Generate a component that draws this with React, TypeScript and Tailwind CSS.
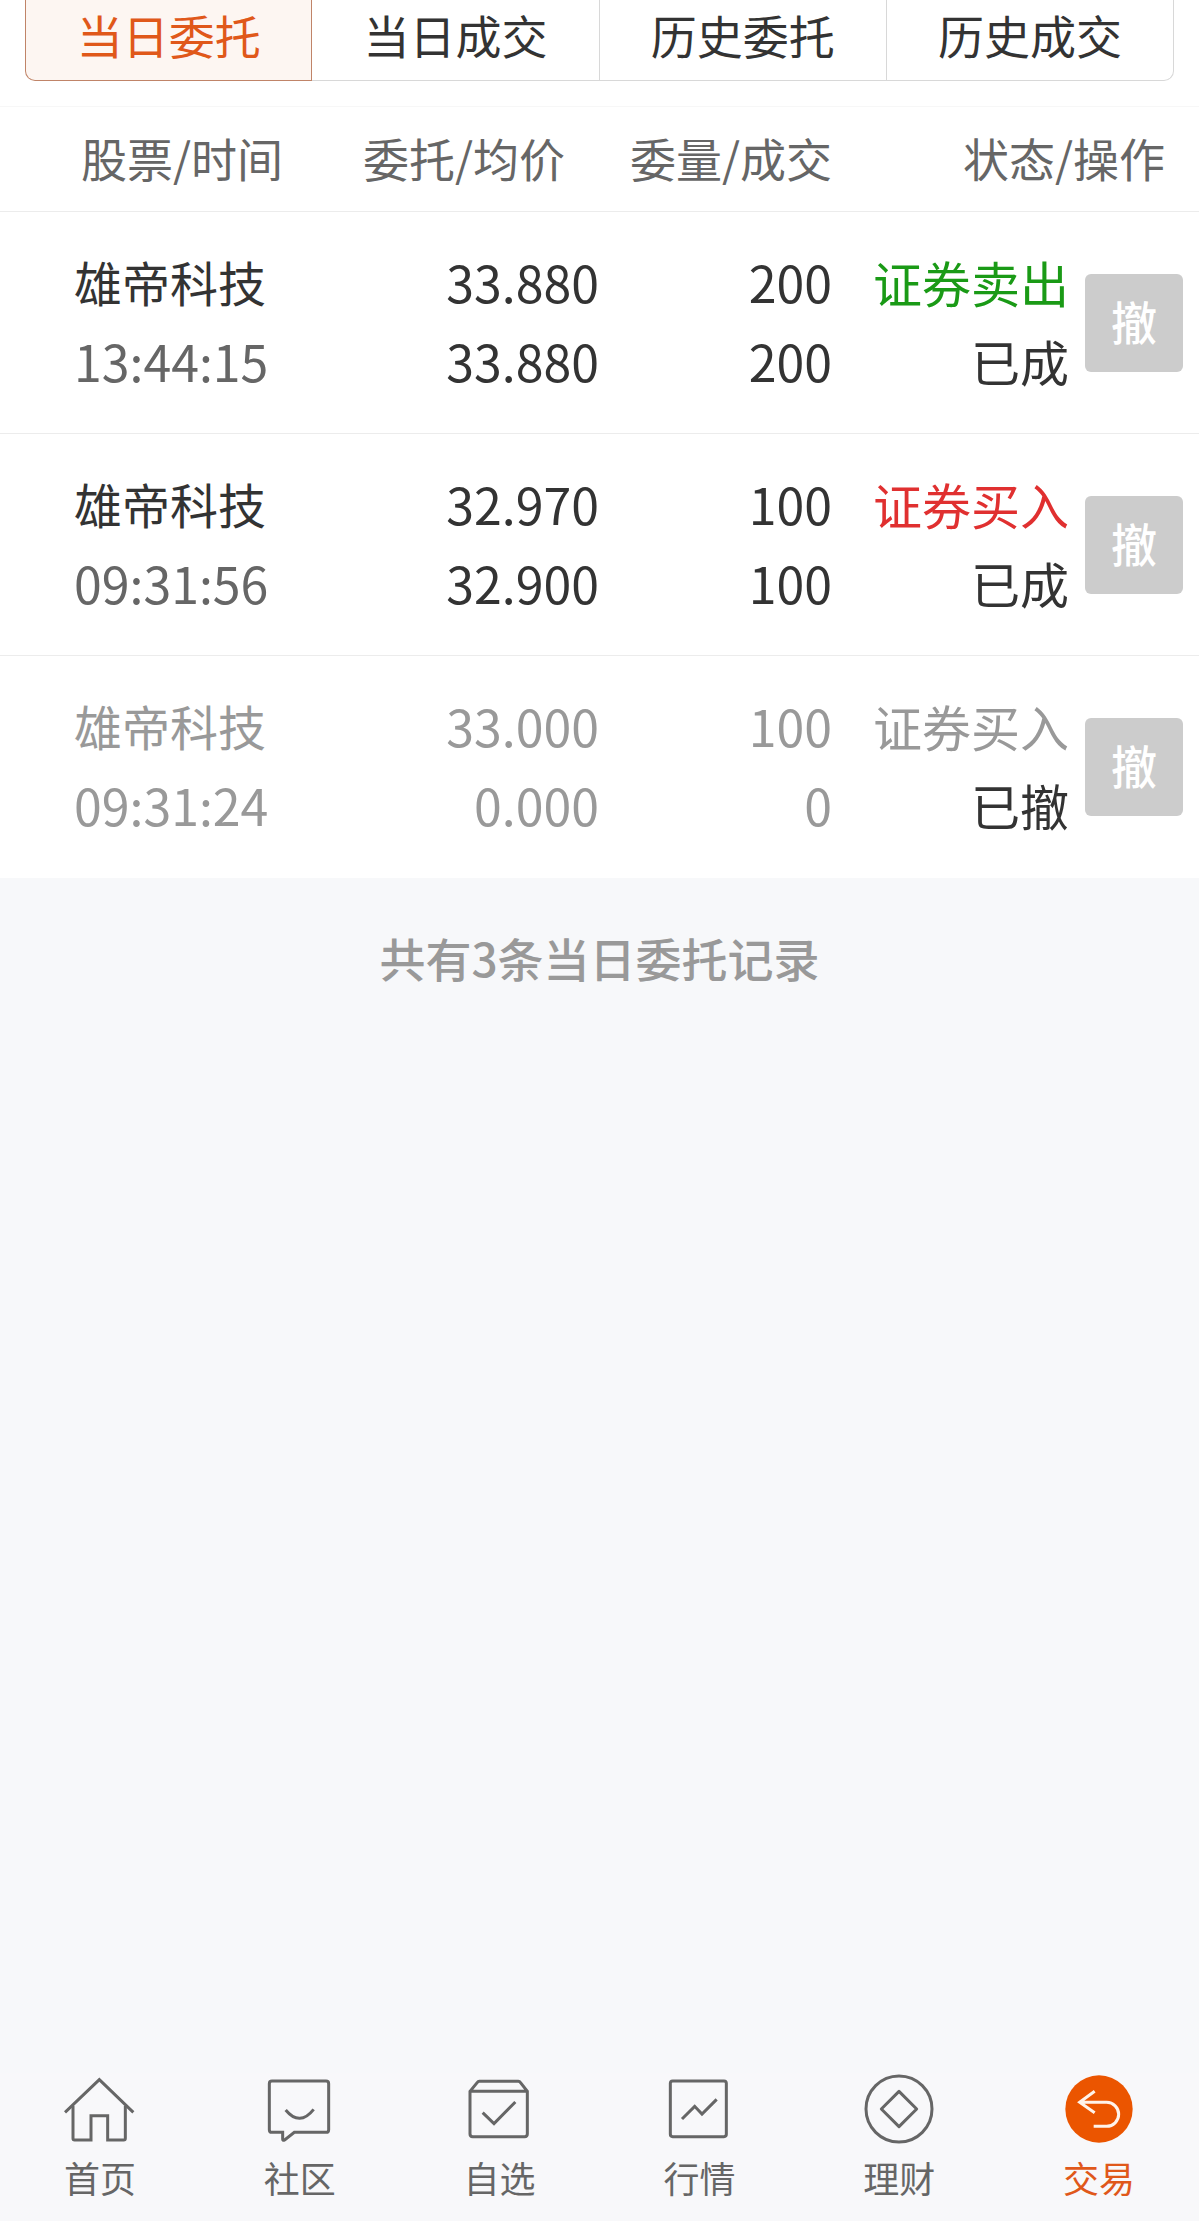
// src/pages/Trade/Orders.tsx
import React, { useState } from "react";
import clsx from "clsx";

const tabs = ["当日委托", "当日成交", "历史委托", "历史成交"];

type Order = {
  name: string;
  time: string;
  price: string;
  avgPrice: string;
  amount: string;
  filled: string;
  side: "buy" | "sell";
  status: string;
  cancelled?: boolean;
};

const orders: Order[] = [
  { name: "雄帝科技", time: "13:44:15", price: "33.880", avgPrice: "33.880", amount: "200", filled: "200", side: "sell", status: "已成" },
  { name: "雄帝科技", time: "09:31:56", price: "32.970", avgPrice: "32.900", amount: "100", filled: "100", side: "buy", status: "已成" },
  { name: "雄帝科技", time: "09:31:24", price: "33.000", avgPrice: "0.000", amount: "100", filled: "0", side: "buy", status: "已撤", cancelled: true },
];

const navItems = [
  {
    label: "首页",
    icon: (
      <>
        <path d="M3 118L106 20L208 118" />
        <path d="M27 98V196Q27 201 32 201H81V128H131V201H179Q184 201 184 196V98" />
      </>
    ),
  },
  {
    label: "社区",
    icon: (
      <>
        <path d="M24 24H186Q194 24 194 32V170Q194 178 186 178H91L62 201Q56 204 56 199V178H24Q16 178 16 170V32Q16 24 24 24Z" />
        <path d="M65 111Q107 162 149 109" />
      </>
    ),
  },
  {
    label: "自选",
    icon: (
      <>
        <path d="M18 55L40 28Q42 25 46 25H163Q167 25 169 28L190 55V183Q190 191 182 191H26Q18 191 18 183ZM18 55H190" />
        <path d="M56 119L90 152L154 87" />
      </>
    ),
  },
  {
    label: "行情",
    icon: (
      <>
        <rect x="22" y="24" width="168" height="167" rx="7" />
        <path d="M57 138L95 100L117 123L161 79" />
      </>
    ),
  },
  {
    label: "理财",
    icon: (
      <>
        <circle cx="108" cy="108" r="99" />
        <path d="M108 55L161 108L108 161L55 108Z" strokeLinejoin="round" />
      </>
    ),
  },
  {
    label: "交易",
    active: true,
    icon: (
      <>
        <circle cx="108" cy="108" r="101" fill="#eb5500" stroke="none" />
        <path d="M95 55L50 88L95 119M50 88H131A36 36 0 0 1 131 160H92" stroke="#fff3ea" />
      </>
    ),
  },
];

function OrderRow({ order }: { order: Order }) {
  const muted = order.cancelled;
  const main = muted ? "text-[#999]" : "text-[#333]";
  const side = order.side === "sell" ? "证券卖出" : "证券买入";

  return (
    <tr className="h-[222px] border-b border-[#ececec] last:border-0">
      <td className="pb-1 pl-[74px]">
        <div className={clsx("text-[48px] leading-[79px]", main)}>{order.name}</div>
        <div className={clsx("text-[50px] leading-[79px]", muted ? "text-[#999]" : "text-[#666]")}>
          {order.time}
        </div>
      </td>
      <td className={clsx("pb-1 text-right text-[50px] leading-[79px]", main)}>
        <div>{order.price}</div>
        <div>{order.avgPrice}</div>
      </td>
      <td className={clsx("pb-1 text-right text-[50px] leading-[79px]", main)}>
        <div>{order.amount}</div>
        <div>{order.filled}</div>
      </td>
      <td className="pb-1 text-right text-[49px] leading-[79px] whitespace-nowrap text-[#333]">
        <div
          className={clsx(
            muted ? "text-[#999]" : order.side === "sell" ? "text-[#1a9a16]" : "text-[#e03030]"
          )}
        >
          {side}
        </div>
        <div>{order.status}</div>
      </td>
      <td className="pl-4">
        <button
          type="button"
          disabled
          className="block size-[98px] rounded-md bg-[#ccc] pb-1 text-[46px] font-medium text-white"
        >
          撤
        </button>
      </td>
    </tr>
  );
}

export default function App() {
  const [activeTab, setActiveTab] = useState(tabs[0]);

  return (
    <div
      lang="zh-CN"
      className="flex min-h-screen flex-col bg-[#f7f8fa] font-['Noto_Sans_CJK_SC',sans-serif] text-[#333]"
    >
      {/* Tabs */}
      <div className="bg-white px-[25px] pb-[25px]">
        <div role="tablist" className="grid h-[81px] grid-cols-4">
          {tabs.map((tab) => (
            <button
              key={tab}
              type="button"
              role="tab"
              aria-selected={tab === activeTab}
              onClick={() => setActiveTab(tab)}
              className={clsx(
                "border-r border-b pb-3 text-[46px] leading-[66px] first:rounded-bl-[10px] first:border-l last:rounded-br-[10px]",
                tab === activeTab
                  ? "border-[#c08468] bg-[#fdf6f2] text-[#e0581a]"
                  : "border-[#d8d8d8] bg-white"
              )}
            >
              {tab}
            </button>
          ))}
        </div>
      </div>

      {/* Orders */}
      <table className="w-full table-fixed bg-white">
        <colgroup>
          <col />
          <col />
          <col className="w-[233px]" />
          <col className="w-[237px]" />
          <col className="w-[130px]" />
        </colgroup>
        <thead>
          <tr className="h-[105px] border-t border-b border-t-[#f7f7f7] border-b-[#ececec] text-[46px] leading-[66px] text-[#666]">
            <th className="pb-1 pl-[81px] text-left font-normal">股票/时间</th>
            <th className="pr-[34px] pb-1 text-right font-normal">委托/均价</th>
            <th className="pb-1 text-right font-normal">委量/成交</th>
            <th colSpan={2} className="pr-[34px] pb-1 text-right font-normal">
              状态/操作
            </th>
          </tr>
        </thead>
        <tbody>
          {orders.map((order) => (
            <OrderRow key={order.time} order={order} />
          ))}
        </tbody>
      </table>

      <p className="pt-11 text-center text-[46px] leading-[70px] font-medium text-[#999]">
        共有{orders.length}条当日委托记录
      </p>

      {/* Bottom nav */}
      <nav className="mt-auto grid grid-cols-6 bg-[#f8f8fa] pb-5">
        {navItems.map((item) => (
          <a
            key={item.label}
            href="#"
            className={clsx(
              "flex flex-col items-center gap-2 text-4xl leading-[48px]",
              item.active ? "text-[#e0581a]" : "text-[#666]"
            )}
          >
            <svg viewBox="0 0 216 216" className="size-[72px]" fill="none" stroke="currentColor" strokeWidth="9" aria-hidden="true">
              {item.icon}
            </svg>
            <span>{item.label}</span>
          </a>
        ))}
      </nav>
    </div>
  );
}
